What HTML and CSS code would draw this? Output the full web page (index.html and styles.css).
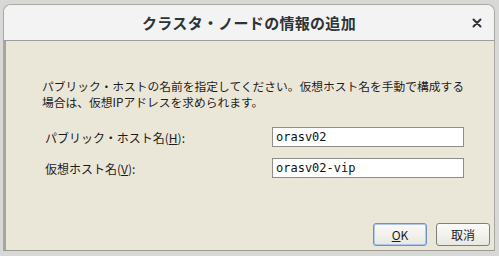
FILE: index.html
```html
<!DOCTYPE html>
<html lang="ja">
<head>
    <meta charset="UTF-8">
    <title>クラスタ・ノードの情報の追加</title>
    <link rel="stylesheet" href="styles.css">
</head>
<body>
    <div class="dialog">
        <div class="titlebar">
            <span class="title">クラスタ・ノードの情報の追加</span>
            <svg class="close" width="10" height="10" viewBox="0 0 10 10">
                <path d="M1.5 1.5 L8.5 8.5 M8.5 1.5 L1.5 8.5" stroke="#2e3436" stroke-width="2" stroke-linecap="round"/>
            </svg>
        </div>
        <div class="content">
            <p class="intro">パブリック・ホストの名前を指定してください。仮想ホスト名を手動で構成する<br>場合は、仮想IPアドレスを求められます。</p>
            <div class="row">
                <label class="label">パブリック・ホスト名(<u>H</u>):</label>
                <input class="field" type="text" value="orasv02">
            </div>
            <div class="row">
                <label class="label">仮想ホスト名(<u>V</u>):</label>
                <input class="field" type="text" value="orasv02-vip">
            </div>
            <div class="buttons">
                <button class="btn btn-default"><u>O</u>K</button>
                <button class="btn">取消</button>
            </div>
        </div>
    </div>
</body>
</html>
```

FILE: styles.css
```css
body {
    margin: 0;
    height: 256px;
    background: #d8d8d6;
    font-family: "Noto Sans CJK JP", "DejaVu Sans", sans-serif;
    overflow: hidden;
}

.dialog {
    margin: 4px 4px 0 3px;
    height: 245px;
    display: flex;
    flex-direction: column;
    border: 1px solid #a9a9a4;
    border-bottom: 1px solid #9a9992;
    border-radius: 8px 8px 0 0;
    background: #ebe7d8;
    overflow: hidden;
}

.titlebar {
    height: 35px;
    background: #f3f3f3;
    border-bottom: 1px solid #9c9c9c;
    display: flex;
    align-items: center;
    justify-content: center;
    position: relative;
}

.title {
    font-size: 15px;
    font-weight: bold;
    color: #2e3436;
    letter-spacing: 0.3px;
}

.close {
    position: absolute;
    right: 12px;
    top: 13px;
}

.content {
    flex-grow: 1;
    display: flex;
    flex-direction: column;
    padding: 37px 0 0 36px;
    border-left: 2px solid #a6a59c;
}

.intro {
    margin: 0 0 17px 0;
    font-size: 11.75px;
    line-height: 16px;
    color: #1c1c1c;
}

.row {
    display: flex;
    align-items: center;
    margin-bottom: 11px;
}

.label {
    width: 227px;
    padding-left: 3px;
    font-size: 12px;
    color: #1c1c1c;
}

.label u,
.btn u {
    text-decoration-thickness: 1px;
}

.field {
    width: 192px;
    height: 20px;
    box-sizing: border-box;
    margin: 0;
    padding: 0 3px;
    border: 1px solid #8e8e8a;
    background: #fff;
    font-family: "DejaVu Sans Mono", monospace;
    font-size: 12px;
    color: #111;
}

.buttons {
    margin-top: auto;
    display: flex;
    justify-content: flex-end;
    gap: 9px;
    padding: 0 4px 4px 0;
}

.btn {
    width: 54px;
    height: 23px;
    border: 1px solid #7f7f7a;
    border-radius: 3px;
    background: linear-gradient(#fbfbf9, #e9e7e0);
    font-family: "Noto Sans CJK JP", "DejaVu Sans", sans-serif;
    font-size: 12px;
    color: #1c1c1c;
    padding: 0;
}

.btn-default {
    border-color: #6a8fc9;
    box-shadow: inset 0 0 0 1px #b3c7ea;
}
```
